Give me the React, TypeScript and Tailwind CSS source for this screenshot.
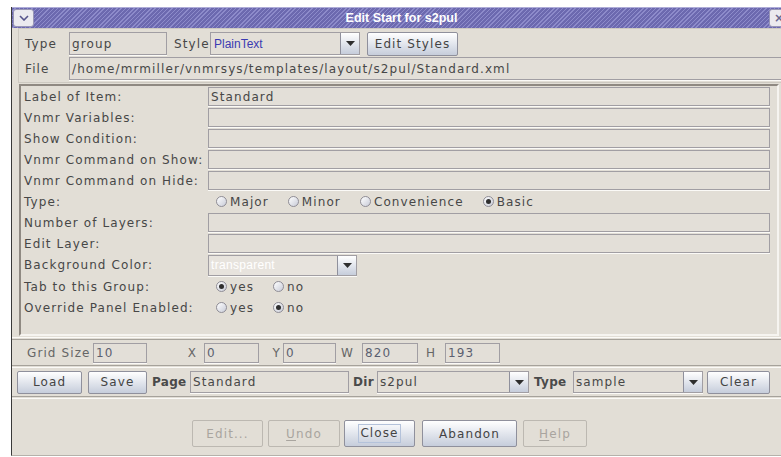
import React from "react";

// shared look for sunken text fields and raised buttons
const field = "border border-[#a19ea3] bg-[#e3dfd8] shadow-[0_1px_0_#fbfaf7]";
const btn =
  "border border-[#8f909c] rounded-[2px] bg-gradient-to-b from-[#ffffff] to-[#c6cddb] text-[#444] flex items-center justify-center";
const btnOff =
  "border border-[#bcb8b1] rounded-[2px] text-[#a9a59f] flex items-center justify-center";

function Arrow() {
  return (
    <div className="w-[19px] h-full border-l border-[#8f909c] bg-gradient-to-b from-[#ffffff] to-[#c6cddb] flex items-center justify-center shrink-0">
      <svg width="9" height="5" viewBox="0 0 9 5">
        <path d="M0 0h9L4.5 5z" fill="#2e2e2e" />
      </svg>
    </div>
  );
}

function Radio({ checked, label }: { checked?: boolean; label: string }) {
  return (
    <span className="flex items-center gap-[3px]">
      <span className="w-[11px] h-[11px] rounded-full border border-[#8f8d96] bg-gradient-to-br from-white to-[#c9ccd8] flex items-center justify-center">
        {checked && <span className="w-[5px] h-[5px] rounded-full bg-[#2f2f2f]" />}
      </span>
      <span>{label}</span>
    </span>
  );
}

function Row({ label, children, h = "h-[21px]" }: { label: string; children?: React.ReactNode; h?: string }) {
  return (
    <div className={`flex items-center ${h}`}>
      <span className="w-[187px] pl-[3px] shrink-0">{label}</span>
      {children}
    </div>
  );
}

function TextRow({ label, value }: { label: string; value?: string }) {
  return (
    <Row label={label}>
      <div className={`${field} w-[562px] h-[19px] flex items-center pl-[2px]`}>{value}</div>
    </Row>
  );
}

export default function App() {
  return (
    <div className="w-[781px] h-[457px] bg-white overflow-hidden pt-[7px] pl-[11px] font-['DejaVu_Sans',sans-serif] text-[12px] tracking-[1.1px] text-[#474747]">
      <div className="w-[784px] h-[449px] border-l border-[#3a3a3a] border-b border-b-[#b5b1aa] bg-[#e2ded6] flex flex-col">
        {/* title bar */}
        <div className="h-[21px] shrink-0 flex items-center border-t border-[#aeacd8] bg-[repeating-linear-gradient(135deg,#6c69af_0px,#6c69af_2px,#8d8bca_2px,#8d8bca_3px)]">
          <div className="ml-[1px] w-[21px] h-[18px] rounded-[3px] border border-[#9896b6] bg-[#ebeaef] flex items-center justify-center">
            <svg width="10" height="6" viewBox="0 0 10 6">
              <path d="M1 1l4 4 4-4" stroke="#56548c" strokeWidth="1.6" fill="none" />
            </svg>
          </div>
          <div className="flex-1 text-center font-['Liberation_Sans',sans-serif] font-bold text-[12.5px] tracking-normal text-white">
            Edit Start for s2pul
          </div>
          <div className="mr-[6px] w-[20px] h-[18px] rounded-[3px] border border-[#9896b6] bg-[#ebeaef] flex items-center justify-center text-[#6a6890] text-[12px] font-bold tracking-normal">
            ×
          </div>
        </div>

        {/* item type / style / file */}
        <div className="ml-[6px] w-[775px] h-[55px] shrink-0 border border-[#cdc9c1] pt-[3px] flex flex-col gap-[2px]">
          <div className="flex items-center h-[23px]">
            <span className="w-[50px] pl-[6px]">Type</span>
            <div className={`${field} w-[98px] h-full flex items-center pl-[2px]`}>group</div>
            <span className="ml-[7px] w-[36px]">Style</span>
            <div className={`${field} w-[150px] h-full flex`}>
              <span className="flex-1 pl-[3px] flex items-center font-['Liberation_Sans',sans-serif] tracking-normal text-[#3b3bb2]">
                PlainText
              </span>
              <Arrow />
            </div>
            <div className={`${btn} ml-[7px] w-[91px] h-[24px]`}>Edit Styles</div>
          </div>
          <div className="flex items-center h-[23px]">
            <span className="w-[50px] pl-[6px]">File</span>
            <div className={`${field} w-[720px] h-full flex items-center pl-[2px]`}>
              /home/mrmiller/vnmrsys/templates/layout/s2pul/Standard.xml
            </div>
          </div>
        </div>

        {/* group properties */}
        <div className="ml-[7px] mt-[1px] w-[760px] h-[252px] shrink-0 border-2 border-t-[#8f8982] border-l-[#8f8982] border-b-[#f6f4f0] border-r-[#f6f4f0] flex flex-col">
          <TextRow label="Label of Item:" value="Standard" />
          <TextRow label="Vnmr Variables:" />
          <TextRow label="Show Condition:" />
          <TextRow label="Vnmr Command on Show:" />
          <TextRow label="Vnmr Command on Hide:" />
          <Row label="Type:">
            <div className="ml-[8px] flex items-center gap-[19px]">
              <Radio label="Major" />
              <Radio label="Minor" />
              <Radio label="Convenience" />
              <Radio label="Basic" checked />
            </div>
          </Row>
          <TextRow label="Number of Layers:" />
          <TextRow label="Edit Layer:" />
          <Row label="Background Color:" h="h-[22px]">
            <div className={`${field} w-[149px] h-[21px] flex bg-[#e7e3dd]`}>
              <span className="flex-1 pl-[2px] flex items-center font-['Liberation_Sans',sans-serif] tracking-[0.3px] text-white">
                transparent
              </span>
              <Arrow />
            </div>
          </Row>
          <Row label="Tab to this Group:">
            <div className="ml-[8px] flex items-center gap-[19px]">
              <Radio label="yes" checked />
              <Radio label="no" />
            </div>
          </Row>
          <Row label="Override Panel Enabled:">
            <div className="ml-[8px] flex items-center gap-[19px]">
              <Radio label="yes" />
              <Radio label="no" checked />
            </div>
          </Row>
        </div>

        <div className="mt-[1px] h-[3px] shrink-0 border-t border-t-[#fbfaf7] border-b border-b-[#a6a29b]" />

        {/* grid geometry */}
        <div className="h-[25px] shrink-0 flex items-center text-[#666]">
          <span className="w-[81px] pl-[15px]">Grid Size</span>
          <div className={`${field} w-[54px] h-[20px] flex items-center pl-[2px] text-[#5c5f70]`}>10</div>
          <span className="w-[57px] text-right pr-[7px]">X</span>
          <div className={`${field} w-[55px] h-[20px] flex items-center pl-[2px] text-[#5c5f70]`}>0</div>
          <span className="w-[24px] text-right pr-[2px]">Y</span>
          <div className={`${field} w-[53px] h-[20px] flex items-center pl-[2px] text-[#5c5f70]`}>0</div>
          <span className="w-[26px] text-right pr-[8px]">W</span>
          <div className={`${field} w-[56px] h-[20px] flex items-center pl-[2px] text-[#5c5f70]`}>820</div>
          <span className="w-[27px] text-right pr-[9px]">H</span>
          <div className={`${field} w-[55px] h-[20px] flex items-center pl-[2px] text-[#5c5f70]`}>193</div>
        </div>

        <div className="h-[3px] shrink-0 border-t border-t-[#a6a29b] border-b border-b-[#fbfaf7]" />

        {/* page load / save */}
        <div className="h-[28px] shrink-0 flex items-center">
          <div className={`${btn} ml-[5px] w-[65px] h-[23px]`}>Load</div>
          <div className={`${btn} ml-[6px] w-[59px] h-[23px]`}>Save</div>
          <span className="ml-[5px] w-[38px] font-bold tracking-[0.3px] text-[#4a4a4a]">Page</span>
          <div className={`${field} w-[159px] h-[22px] flex items-center pl-[2px]`}>Standard</div>
          <span className="ml-[4px] w-[24px] font-bold tracking-[0.3px] text-[#4a4a4a]">Dir</span>
          <div className={`${field} w-[152px] h-[22px] flex`}>
            <span className="flex-1 pl-[2px] flex items-center">s2pul</span>
            <Arrow />
          </div>
          <span className="ml-[5px] w-[39px] font-bold tracking-[0.3px] text-[#4a4a4a]">Type</span>
          <div className={`${field} w-[130px] h-[22px] flex`}>
            <span className="flex-1 pl-[2px] flex items-center">sample</span>
            <Arrow />
          </div>
          <div className={`${btn} ml-[4px] w-[63px] h-[23px]`}>Clear</div>
        </div>

        <div className="h-[3px] shrink-0 border-t border-t-[#a6a29b] border-b border-b-[#fbfaf7]" />

        {/* dialog actions */}
        <div className="flex-1 flex items-start pt-[21px]">
          <div className={`${btnOff} ml-[180px] w-[71px] h-[27px]`}>Edit...</div>
          <div className={`${btnOff} ml-[5px] w-[72px] h-[27px]`}>
            <span className="underline underline-offset-2">U</span>ndo
          </div>
          <div className={`${btn} ml-[4px] w-[71px] h-[27px]`}>
            <span className="border border-[#b4c2da] px-[1px] leading-[17px]">Close</span>
          </div>
          <div className={`${btn} ml-[7px] w-[95px] h-[27px]`}>Abandon</div>
          <div className={`${btnOff} ml-[6px] w-[64px] h-[27px]`}>
            <span className="underline underline-offset-2">H</span>elp
          </div>
        </div>
      </div>
    </div>
  );
}
